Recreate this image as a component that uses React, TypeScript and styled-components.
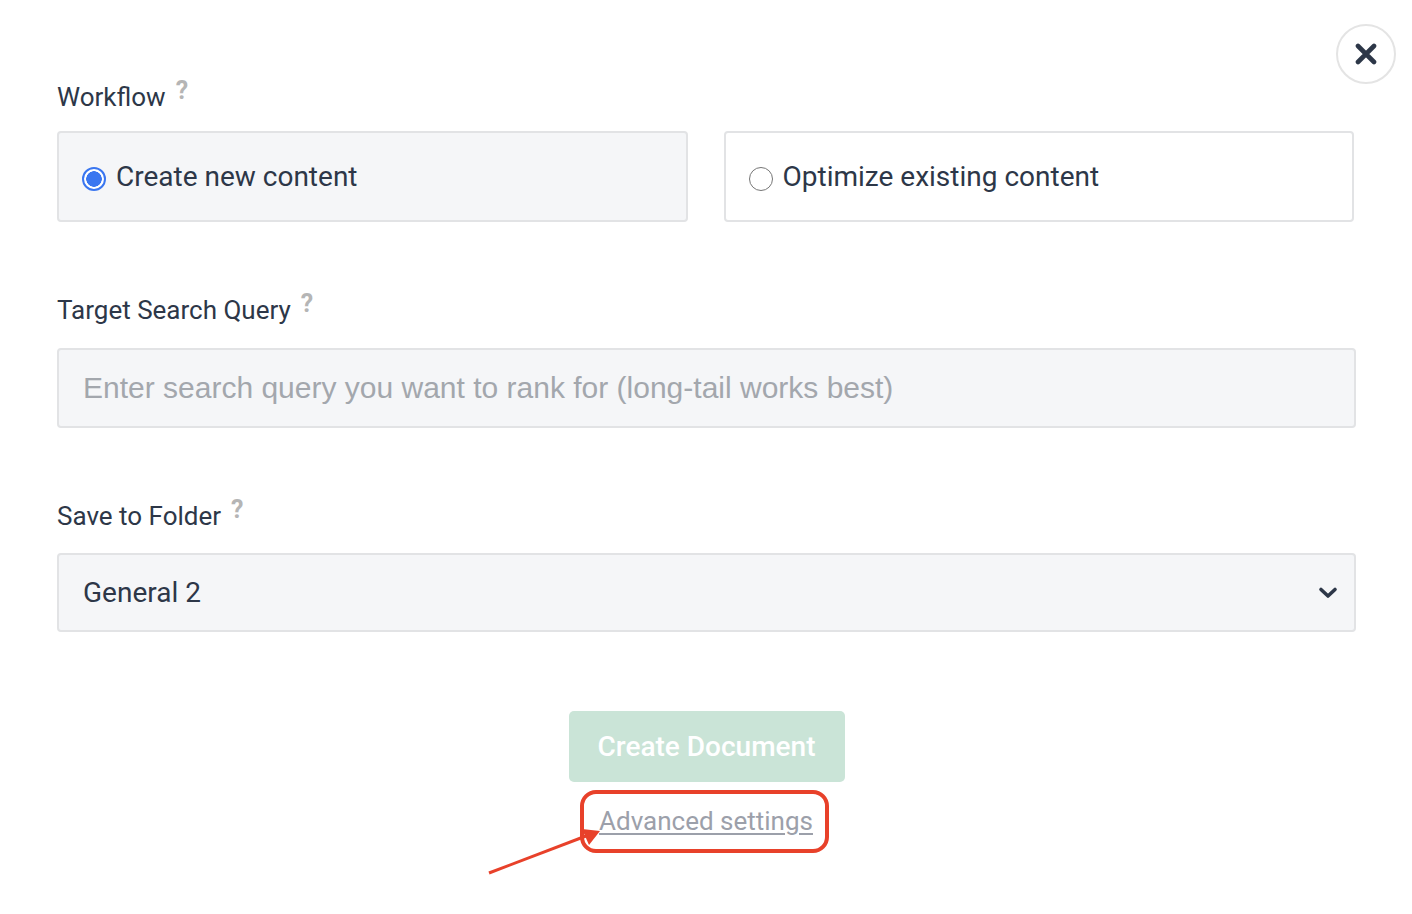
import React from "react";
import styled, { createGlobalStyle } from "styled-components";

const GlobalStyle = createGlobalStyle`
  html, body { margin: 0; padding: 0; background: #ffffff; }
  body { font-family: Roboto, "Liberation Sans", Arial, sans-serif; color: #2d3748; }
  * { box-sizing: border-box; }
`;

const Page = styled.div`
  position: relative;
  width: 1412px;
  height: 914px;
  padding: 82px 56px 0 57px;
  display: flex;
  flex-direction: column;
`;

const CloseButton = styled.button`
  position: absolute;
  top: 24px;
  right: 16px;
  width: 60px;
  height: 60px;
  border-radius: 50%;
  border: 2px solid #e4e4e4;
  background: #ffffff;
  display: flex;
  align-items: center;
  justify-content: center;
  padding: 0;
  cursor: pointer;
`;

const Field = styled.div<{ $gapAfter: number }>`
  display: flex;
  flex-direction: column;
  margin-bottom: ${(p) => p.$gapAfter}px;
`;

const Label = styled.div<{ $space: number }>`
  font-size: 26px;
  line-height: 31px;
  color: #2d3748;
  margin-bottom: ${(p) => p.$space}px;
  display: flex;
  align-items: flex-start;
`;

const Help = styled.span`
  font-size: 25px;
  font-weight: 700;
  line-height: 25px;
  color: #b5b5b5;
  margin-left: 10px;
  margin-top: -4px;
`;

const OptionRow = styled.div`
  display: grid;
  grid-template-columns: 1fr 1fr;
  gap: 36px;
  width: 1297px;
`;

const Option = styled.label<{ $selected: boolean }>`
  height: 91px;
  border: 2px solid #e2e3e5;
  border-radius: 4px;
  background: ${(p) => (p.$selected ? "#f5f6f8" : "#ffffff")};
  display: flex;
  align-items: center;
  padding-left: 23px;
  gap: 10px;
  font-size: 28px;
  color: #2d3748;
  cursor: pointer;
`;

const Radio = styled.span<{ $checked: boolean }>`
  width: 24px;
  height: 24px;
  border-radius: 50%;
  flex: none;
  margin-top: 4px;
  border: ${(p) => (p.$checked ? "2px solid #3a76f0" : "1.5px solid #767676")};
  background: ${(p) => (p.$checked ? "radial-gradient(circle, #3a76f0 0 7.5px, #ffffff 8px)" : "#ffffff")};
`;

const TextBox = styled.div<{ $placeholder?: boolean }>`
  width: 1299px;
  height: ${(p) => (p.$placeholder ? "80px" : "79px")};
  border: 2px solid #e2e3e5;
  border-radius: 4px;
  background: #f5f6f8;
  display: flex;
  align-items: center;
  justify-content: space-between;
  padding: 0 16px 0 24px;
  font-size: ${(p) => (p.$placeholder ? "30px" : "28px")};
  font-family: ${(p) => (p.$placeholder ? '"Liberation Sans", Arial, sans-serif' : 'Roboto, "Liberation Sans", Arial, sans-serif')};
  color: ${(p) => (p.$placeholder ? "#a3a7ad" : "#2d3748")};
`;

const Actions = styled.div`
  display: flex;
  flex-direction: column;
  align-items: center;
  margin-top: -1px;
`;

const PrimaryButton = styled.button`
  width: 276px;
  height: 71px;
  border: none;
  border-radius: 5px;
  background: #cae4d7;
  color: #ffffff;
  font-family: Roboto, "Liberation Sans", Arial, sans-serif;
  font-size: 28px;
  font-weight: 500;
  cursor: default;
`;

const Highlight = styled.div`
  position: relative;
  margin-top: 8px;
  margin-left: -4px;
  border: 4px solid #e8412a;
  border-radius: 16px;
  padding: 12px 12px 12px 15px;
`;

const LinkText = styled.a`
  display: block;
  font-size: 26px;
  line-height: 31px;
  color: #9ca0aa;
  text-decoration: underline;
  text-decoration-thickness: 1.5px;
  text-underline-offset: 3px;
`;

const Arrow = styled.svg`
  position: absolute;
  left: -102px;
  top: 26px;
  overflow: visible;
`;

export default function App() {
  return (
    <>
      <GlobalStyle />
      <Page>
        <CloseButton aria-label="Close">
          <svg width="22" height="22" viewBox="0 0 22 22">
            <path d="M3 3 L19 19 M19 3 L3 19" stroke="#2d3748" strokeWidth="4.6" strokeLinecap="round" />
          </svg>
        </CloseButton>

        <Field $gapAfter={73}>
          <Label $space={18}>
            Workflow<Help>?</Help>
          </Label>
          <OptionRow>
            <Option $selected>
              <Radio $checked />
              Create new content
            </Option>
            <Option $selected={false}>
              <Radio $checked={false} />
              Optimize existing content
            </Option>
          </OptionRow>
        </Field>

        <Field $gapAfter={73}>
          <Label $space={22}>
            Target Search Query<Help>?</Help>
          </Label>
          <TextBox $placeholder>Enter search query you want to rank for (long-tail works best)</TextBox>
        </Field>

        <Field $gapAfter={80}>
          <Label $space={21}>
            Save to Folder<Help>?</Help>
          </Label>
          <TextBox>
            General 2
            <svg width="20" height="14" viewBox="0 0 20 14">
              <path d="M3 3.5 L10 10 L17 3.5" fill="none" stroke="#2d3748" strokeWidth="3.6" strokeLinecap="round" strokeLinejoin="round" />
            </svg>
          </TextBox>
        </Field>

        <Actions>
          <PrimaryButton>Create Document</PrimaryButton>
          <Highlight>
            <LinkText>Advanced settings</LinkText>
            <Arrow width="130" height="60" viewBox="0 0 130 60">
              <line x1="7" y1="53" x2="104" y2="16" stroke="#e8412a" strokeWidth="3" />
              <polygon points="118,11 100,9 107,25" fill="#e8412a" />
            </Arrow>
          </Highlight>
        </Actions>
      </Page>
    </>
  );
}
